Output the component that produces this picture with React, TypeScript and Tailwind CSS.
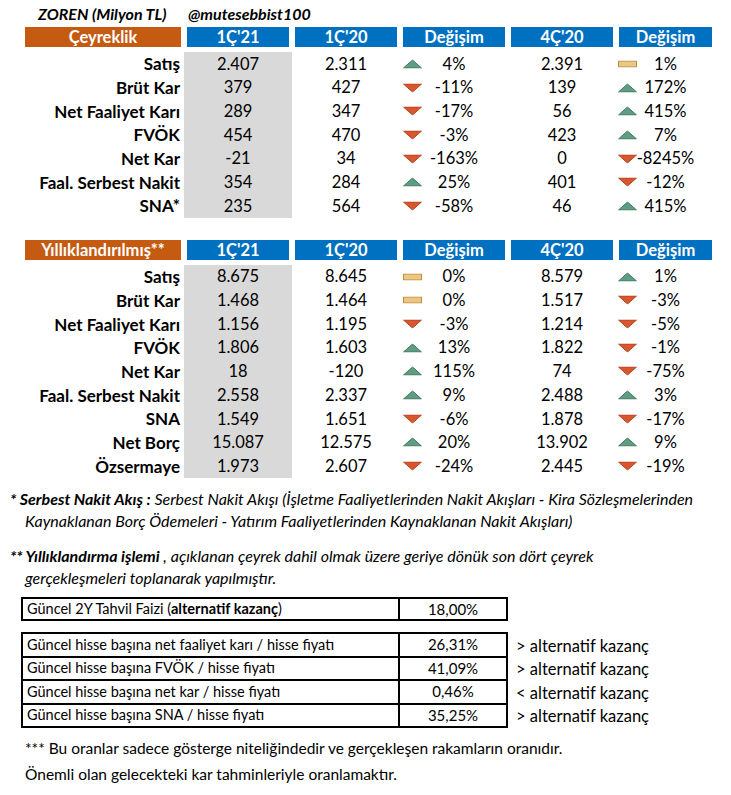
import type { ReactNode } from "react";

type Trend = "up" | "down" | "flat";

type Row = {
  label: string;
  cur: string;
  prev: string;
  d1: string;
  t1: Trend;
  q4: string;
  d2: string;
  t2: Trend;
};

const quarterly: Row[] = [
  { label: "Satış", cur: "2.407", prev: "2.311", d1: "4%", t1: "up", q4: "2.391", d2: "1%", t2: "flat" },
  { label: "Brüt Kar", cur: "379", prev: "427", d1: "-11%", t1: "down", q4: "139", d2: "172%", t2: "up" },
  { label: "Net Faaliyet Karı", cur: "289", prev: "347", d1: "-17%", t1: "down", q4: "56", d2: "415%", t2: "up" },
  { label: "FVÖK", cur: "454", prev: "470", d1: "-3%", t1: "down", q4: "423", d2: "7%", t2: "up" },
  { label: "Net Kar", cur: "-21", prev: "34", d1: "-163%", t1: "down", q4: "0", d2: "-8245%", t2: "down" },
  { label: "Faal. Serbest Nakit", cur: "354", prev: "284", d1: "25%", t1: "up", q4: "401", d2: "-12%", t2: "down" },
  { label: "SNA*", cur: "235", prev: "564", d1: "-58%", t1: "down", q4: "46", d2: "415%", t2: "up" },
];

const annual: Row[] = [
  { label: "Satış", cur: "8.675", prev: "8.645", d1: "0%", t1: "flat", q4: "8.579", d2: "1%", t2: "up" },
  { label: "Brüt Kar", cur: "1.468", prev: "1.464", d1: "0%", t1: "flat", q4: "1.517", d2: "-3%", t2: "down" },
  { label: "Net Faaliyet Karı", cur: "1.156", prev: "1.195", d1: "-3%", t1: "down", q4: "1.214", d2: "-5%", t2: "down" },
  { label: "FVÖK", cur: "1.806", prev: "1.603", d1: "13%", t1: "up", q4: "1.822", d2: "-1%", t2: "down" },
  { label: "Net Kar", cur: "18", prev: "-120", d1: "115%", t1: "up", q4: "74", d2: "-75%", t2: "down" },
  { label: "Faal. Serbest Nakit", cur: "2.558", prev: "2.337", d1: "9%", t1: "up", q4: "2.488", d2: "3%", t2: "up" },
  { label: "SNA", cur: "1.549", prev: "1.651", d1: "-6%", t1: "down", q4: "1.878", d2: "-17%", t2: "down" },
  { label: "Net Borç", cur: "15.087", prev: "12.575", d1: "20%", t1: "up", q4: "13.902", d2: "9%", t2: "up" },
  { label: "Özsermaye", cur: "1.973", prev: "2.607", d1: "-24%", t1: "down", q4: "2.445", d2: "-19%", t2: "down" },
];

const ratios = [
  { label: "Güncel hisse başına net faaliyet karı / hisse fiyatı", value: "26,31%", note: "> alternatif kazanç" },
  { label: "Güncel hisse başına FVÖK / hisse fiyatı", value: "41,09%", note: "> alternatif kazanç" },
  { label: "Güncel hisse başına net kar / hisse fiyatı", value: "0,46%", note: "< alternatif kazanç" },
  { label: "Güncel hisse başına SNA / hisse fiyatı", value: "35,25%", note: "> alternatif kazanç" },
];

const grid = "grid grid-cols-[162px_108px_108px_108px_108px_99px]";

function TrendIcon({ trend }: { trend: Trend }) {
  if (trend === "flat") {
    return (
      <svg width="19" height="7" viewBox="0 0 19 7">
        <rect x="0.5" y="0.5" width="18" height="6" fill="#edc682" stroke="#b8913f" />
      </svg>
    );
  }
  if (trend === "up") {
    return (
      <svg width="19" height="9" viewBox="0 0 19 9">
        <polygon points="0.5,8.5 9.5,0.5 18.5,8.5" fill="#5f9c82" stroke="#437b62" />
      </svg>
    );
  }
  return (
    <svg width="19" height="9" viewBox="0 0 19 9">
      <polygon points="0.5,0.5 18.5,0.5 9.5,8.5" fill="#d9572f" stroke="#b5441f" />
    </svg>
  );
}

function HeadCell({ children, orange }: { children: ReactNode; orange?: boolean }) {
  return (
    <div
      className={`mx-[3px] flex h-[20px] items-center justify-center text-[16.5px] font-bold leading-none text-white ${
        orange ? "bg-[#c55a11]" : "bg-[#0070c0]"
      }`}
    >
      {children}
    </div>
  );
}

function Change({ value, trend, iconLeft }: { value: string; trend: Trend; iconLeft: string }) {
  return (
    <div className="relative flex items-center justify-center">
      <span className={`absolute top-1/2 -translate-y-1/2 flex ${iconLeft}`}>
        <TrendIcon trend={trend} />
      </span>
      {value}
    </div>
  );
}

function Section({ title, rows }: { title: string; rows: Row[] }) {
  return (
    <div>
      <div className={grid}>
        <HeadCell orange>{title}</HeadCell>
        <HeadCell>1Ç'21</HeadCell>
        <HeadCell>1Ç'20</HeadCell>
        <HeadCell>Değişim</HeadCell>
        <HeadCell>4Ç'20</HeadCell>
        <HeadCell>Değişim</HeadCell>
      </div>
      <div className="mt-[5px]">
        {rows.map((r) => (
          <div key={r.label} className={`${grid} h-[23.7px] text-[16.5px] leading-none text-black`}>
            <div className="flex items-center justify-end whitespace-nowrap pr-[4px] text-[17px] font-bold">
              {r.label}
            </div>
            <div className="flex items-center justify-center bg-[#d9d9d9]">{r.cur}</div>
            <div className="flex items-center justify-center">{r.prev}</div>
            <Change value={r.d1} trend={r.t1} iconLeft="left-[3px]" />
            <div className="flex items-center justify-center">{r.q4}</div>
            <Change value={r.d2} trend={r.t2} iconLeft="left-[2px]" />
          </div>
        ))}
      </div>
    </div>
  );
}

export default function App() {
  return (
    <div className="h-[795px] w-[731px] bg-white pl-[22px] font-['Lato',sans-serif] text-black">
      <div className="flex h-[27px] items-center text-[16px] font-bold italic">
        <span className="w-[166px] pl-[16px]">ZOREN (Milyon TL)</span>
        <span>@mutesebbist100</span>
      </div>

      <Section title="Çeyreklik" rows={quarterly} />
      <div className="h-[22px]" />
      <Section title="Yıllıklandırılmış**" rows={annual} />

      <div className="-ml-[12px] mt-[10px] text-[16px] italic leading-[22px]">
        <p className="whitespace-nowrap">
          <span className="font-bold">* Serbest Nakit Akış :</span> Serbest Nakit Akışı (İşletme Faaliyetlerinden
          Nakit Akışları - Kira Sözleşmelerinden
        </p>
        <p className="whitespace-nowrap pl-[15px]">
          Kaynaklanan Borç Ödemeleri - Yatırım Faaliyetlerinden Kaynaklanan Nakit Akışları)
        </p>
        <p className="mt-[13px] whitespace-nowrap">
          <span className="font-bold">** Yıllıklandırma işlemi</span> , açıklanan çeyrek dahil olmak üzere geriye
          dönük son dört çeyrek
        </p>
        <p className="whitespace-nowrap pl-[15px]">gerçekleşmeleri toplanarak yapılmıştır.</p>
      </div>

      <div className="-ml-px mt-[8px] text-[14.5px] leading-none">
        <div className="flex h-[24px] w-[487px] border-2 border-black">
          <div className="flex w-[377px] items-center border-r-2 border-black pl-[4px]">
            Güncel 2Y Tahvil Faizi (<span className="font-bold">alternatif kazanç</span>)
          </div>
          <div className="flex flex-1 items-center justify-center text-[15px]">18,00%</div>
        </div>

        <div className="mt-[11px] flex items-start">
          <div className="w-[487px] border-2 border-black">
            {ratios.map((r, i) => (
              <div key={r.label} className={`flex h-[21.5px] ${i > 0 ? "h-[23.5px] border-t-2 border-black" : ""}`}>
                <div className="flex w-[377px] items-center border-r-2 border-black pl-[4px]">{r.label}</div>
                <div className="flex flex-1 items-center justify-center text-[15px]">{r.value}</div>
              </div>
            ))}
          </div>
          <div className="pl-[8px] pt-[2px]">
            {ratios.map((r) => (
              <div key={r.label} className="flex h-[23.5px] items-center text-[16.5px]">
                {r.note}
              </div>
            ))}
          </div>
        </div>
      </div>

      <div className="mt-[7px] pl-[3px] text-[15.5px] leading-[26px]">
        <p>*** Bu oranlar sadece gösterge niteliğindedir ve gerçekleşen rakamların oranıdır.</p>
        <p>Önemli olan gelecekteki kar tahminleriyle oranlamaktır.</p>
      </div>
    </div>
  );
}
